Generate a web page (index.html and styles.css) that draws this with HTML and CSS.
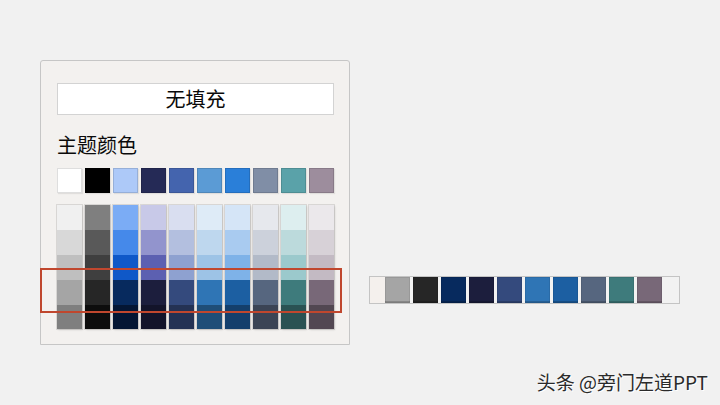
FILE: index.html
```html
<!DOCTYPE html>
<html lang="zh">
<head>
<meta charset="utf-8">
<link rel="stylesheet" href="styles.css">
</head>
<body>
<div class="stage">
  <div class="panel">
    <div class="nofill">无填充</div>
    <div class="label">主题颜色</div>
    <div class="toprow">
      <span class="sw" style="background:#ffffff"></span>
      <span class="sw" style="background:#000000"></span>
      <span class="sw" style="background:#adc9f8"></span>
      <span class="sw" style="background:#252a56"></span>
      <span class="sw" style="background:#4464ae"></span>
      <span class="sw" style="background:#5b9bd5"></span>
      <span class="sw" style="background:#2a7fd9"></span>
      <span class="sw" style="background:#808ea6"></span>
      <span class="sw" style="background:#5aa2a9"></span>
      <span class="sw" style="background:#9d8d9d"></span>
    </div>
    <div class="grid">
      <div class="col"><span style="background:#f0f0f0"></span><span style="background:#d8d8d8"></span><span style="background:#bfbfbf"></span><span style="background:#a5a5a5"></span><span style="background:#7f7f7f"></span></div>
      <div class="col"><span style="background:#7f7f7f"></span><span style="background:#595959"></span><span style="background:#3f3f3f"></span><span style="background:#262626"></span><span style="background:#0d0d0d"></span></div>
      <div class="col"><span style="background:#7bacf5"></span><span style="background:#4589ea"></span><span style="background:#0f58c8"></span><span style="background:#072a5e"></span><span style="background:#041634"></span></div>
      <div class="col"><span style="background:#c8c9e8"></span><span style="background:#9294cd"></span><span style="background:#5c60b1"></span><span style="background:#1c1e3d"></span><span style="background:#13142a"></span></div>
      <div class="col"><span style="background:#d9def0"></span><span style="background:#b3bfdf"></span><span style="background:#8ea1d0"></span><span style="background:#344a7d"></span><span style="background:#243254"></span></div>
      <div class="col"><span style="background:#deebf7"></span><span style="background:#bed7ee"></span><span style="background:#9dc3e6"></span><span style="background:#2f75b5"></span><span style="background:#1f4e78"></span></div>
      <div class="col"><span style="background:#d5e5f7"></span><span style="background:#a9cbf0"></span><span style="background:#7eb2e8"></span><span style="background:#1c5fa2"></span><span style="background:#143f6c"></span></div>
      <div class="col"><span style="background:#e6e8ed"></span><span style="background:#ccd1db"></span><span style="background:#b2bac8"></span><span style="background:#56667f"></span><span style="background:#3b4455"></span></div>
      <div class="col"><span style="background:#ddeeef"></span><span style="background:#bcdadc"></span><span style="background:#9bc9cc"></span><span style="background:#3e7b7c"></span><span style="background:#2a5253"></span></div>
      <div class="col"><span style="background:#ebe8eb"></span><span style="background:#d7d1d7"></span><span style="background:#c3bac3"></span><span style="background:#786878"></span><span style="background:#524752"></span></div>
    </div>
    <div class="highlight"></div>
  </div>
  <div class="strip">
    <span class="sw2" style="background:#a5a5a5"></span>
    <span class="sw2" style="background:#262626"></span>
    <span class="sw2" style="background:#072a5e"></span>
    <span class="sw2" style="background:#1c1e3d"></span>
    <span class="sw2" style="background:#344a7d"></span>
    <span class="sw2" style="background:#2f75b5"></span>
    <span class="sw2" style="background:#1c5fa2"></span>
    <span class="sw2" style="background:#56667f"></span>
    <span class="sw2" style="background:#3e7b7c"></span>
    <span class="sw2" style="background:#786878"></span>
  </div>
</div>
<div class="watermark">头条 @旁门左道PPT</div>
</body>
</html>
```

FILE: styles.css
```css
html, body {
  margin: 0;
  padding: 0;
}
body {
  width: 720px;
  height: 405px;
  background: #f1f1f1;
  font-family: "Noto Sans CJK SC", "Noto Sans", sans-serif;
  color: #1a1a1a;
  position: relative;
  overflow: hidden;
}
.stage {
  display: flex;
  align-items: flex-start;
  padding: 60px 0 0 40px;
}
.panel {
  position: relative;
  box-sizing: border-box;
  width: 310px;
  height: 285px;
  border: 1px solid #c6c6c6;
  border-radius: 3px 3px 0 0;
  background: #f3f1ef;
  padding: 22px 0 0 16px;
}
.nofill {
  box-sizing: border-box;
  width: 277px;
  height: 32px;
  background: #ffffff;
  border: 1px solid #d3d3d3;
  font-size: 20px;
  line-height: 29px;
  text-align: center;
  color: #0a0a0a;
}
.label {
  margin-top: 17px;
  font-size: 20px;
  line-height: 26px;
  height: 26px;
  color: #0a0a0a;
}
.toprow {
  margin-top: 10px;
  display: flex;
  gap: 3px;
}
.sw {
  display: block;
  width: 25px;
  height: 25px;
  box-sizing: border-box;
  box-shadow: inset 0 0 0 1px rgba(0, 0, 0, 0.13), 1px 1px 1px rgba(0, 0, 0, 0.08);
}
.grid {
  margin-top: 12px;
  display: flex;
  gap: 3px;
}
.col {
  display: flex;
  flex-direction: column;
  width: 25px;
  box-shadow: 0 0 0 1px rgba(0, 0, 0, 0.1), 1px 1px 2px rgba(0, 0, 0, 0.12);
}
.col span {
  display: block;
  height: 25px;
}
.col span:last-child {
  height: 24px;
}
.highlight {
  position: absolute;
  left: -1px;
  top: 207px;
  width: 302px;
  height: 45px;
  box-sizing: border-box;
  border: 2px solid #c0472e;
}
.strip {
  margin: 216px 0 0 19px;
  box-sizing: border-box;
  width: 311px;
  height: 28px;
  border: 1px solid #c4c4c4;
  background: linear-gradient(to right, #f4f0ed 0, #f4f0ed 16px, #f2f2f2 16px);
  display: flex;
  gap: 3px;
  padding: 0 0 0 15px;
}
.sw2 {
  display: block;
  width: 25px;
  height: 26px;
  box-shadow: inset 0 -2px 0 rgba(0, 0, 0, 0.18), inset 0 0 0 1px rgba(0, 0, 0, 0.08);
}
.watermark {
  position: absolute;
  right: 12px;
  top: 371px;
  font-size: 19px;
  line-height: 22px;
  color: #2a2a2a;
  text-shadow: 1px 1px 0 #ffffff;
}
```
